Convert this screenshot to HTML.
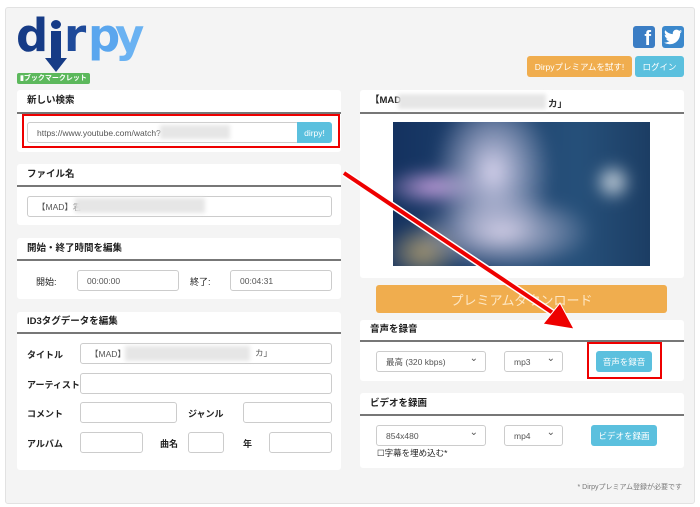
<!DOCTYPE html>
<html><head><meta charset="utf-8"><style>
*{box-sizing:border-box;margin:0;padding:0}
body{width:700px;height:507px;background:#fff;position:relative;overflow:hidden;font-family:"Liberation Sans","Noto Sans CJK JP",sans-serif;font-size:9px;color:#333}
.a{position:absolute}
.wrap{left:5px;top:7px;width:690px;height:497px;background:#f4f4f4;border:1px solid #e2e2e2;border-radius:3px}
.panel{position:absolute;background:#fff;border-radius:3px}
.ph{position:absolute;left:0;right:0;top:0;border-bottom:2px solid #777;font-weight:bold;font-size:9.5px;color:#222;padding-left:10px}
.in{position:absolute;background:#fff;border:1px solid #ccc;border-radius:3px;font-size:8.5px;color:#555;padding-left:9px;display:flex;align-items:center}
.lb{position:absolute;font-size:9px;font-weight:bold;color:#222}
.btn{position:absolute;color:#fff;border-radius:3px;display:flex;align-items:center;justify-content:center;font-size:8.5px}
.blur{position:absolute;background:#e6e6e6;filter:blur(2px)}
.sel:after{content:"⌄";position:absolute;right:7px;top:1px;font-size:10px;color:#555}
.lg{position:absolute;font-family:'DejaVu Sans',sans-serif;font-weight:bold;font-size:45px;line-height:45px;top:13px}
</style></head><body>
<div class="a wrap"></div>
<!-- logo -->
<div class="lg" style="left:16px;color:#163b86">d</div>
<div class="a" style="left:51px;top:20px;width:10px;height:9px;border-radius:50%;background:#163b86"></div>
<div class="a" style="left:51px;top:31px;width:10px;height:29px;background:#163b86"></div>
<div class="a" style="left:45px;top:58px;width:0;height:0;border-left:11px solid transparent;border-right:11px solid transparent;border-top:14px solid #163b86"></div>
<div class="lg" style="left:64px;color:#1e4a9a">r</div>
<div class="lg" style="left:88px;color:#5aa6ee">p</div>
<div class="lg" style="left:115px;color:#6ab2f2">y</div>
<div class="a" style="left:17px;top:73px;width:73px;height:11px;background:#5cb85c;border-radius:2px;color:#fff;font-size:7px;font-weight:bold;line-height:11px;padding-left:3px">▮ブックマークレット</div>
<!-- social -->
<div class="a" style="left:633px;top:26px;width:22px;height:22px;background:#3b7dc4;border-radius:3px;color:#fff;font-weight:bold;font-size:20px;text-align:right;padding-right:4px;line-height:26px">f</div>
<div class="a" style="left:662px;top:26px;width:22px;height:22px;background:#3b88cc;border-radius:3px"></div>
<svg class="a" style="left:664px;top:29px" width="18" height="16" viewBox="0 0 24 20"><path fill="#fff" d="M24 2.4c-.9.4-1.8.6-2.8.8 1-.6 1.8-1.6 2.2-2.7-1 .6-2 1-3.1 1.2C19.3.7 18 .1 16.6.1c-2.7 0-4.900 2.2-4.9 4.9 0 .4 0 .8.1 1.1C7.7 5.9 4.1 4 1.7 1 1.2 1.7 1 2.6 1 3.5c0 1.7.9 3.2 2.2 4.1-.8 0-1.6-.2-2.2-.6v.1c0 2.4 1.7 4.4 3.9 4.8-.4.1-.8.2-1.3.2-.3 0-.6 0-.9-.1.6 2 2.4 3.4 4.6 3.4-1.7 1.3-3.800 2.1-6.1 2.1-.4 0-.8 0-1.2-.1 2.2 1.4 4.8 2.2 7.5 2.2 9.1 0 14-7.5 14-14v-.6c1-.7 1.8-1.600 2.5-2.6z"/></svg>
<div class="btn" style="left:527px;top:56px;width:105px;height:21px;background:#f0ad4e">Dirpyプレミアムを試す!</div>
<div class="btn" style="left:635px;top:56px;width:49px;height:21px;background:#5bc0de">ログイン</div>
<!-- left panels -->
<div class="panel" style="left:17px;top:90px;width:324px;height:62px"><div class="ph" style="height:24px;line-height:22px">新しい検索</div></div>
<div class="in" style="left:27px;top:122px;width:272px;height:21px">https://www.youtube.com/watch?</div>
<div class="blur" style="left:160px;top:125px;width:70px;height:14px"></div>
<div class="btn" style="left:297px;top:122px;width:35px;height:21px;background:#5bc0de;border-radius:0 3px 3px 0">dirpy!</div>
<div class="a" style="left:22px;top:114px;width:318px;height:34px;border:2px solid #e00"></div>

<div class="panel" style="left:17px;top:164px;width:324px;height:61px"><div class="ph" style="height:23px;line-height:21px">ファイル名</div></div>
<div class="in" style="left:27px;top:196px;width:305px;height:21px">【MAD】君</div>
<div class="blur" style="left:75px;top:198px;width:130px;height:15px"></div>

<div class="panel" style="left:17px;top:238px;width:324px;height:61px"><div class="ph" style="height:23px;line-height:21px">開始・終了時間を編集</div></div>
<div class="lb" style="left:36px;top:275px;font-weight:normal">開始:</div>
<div class="in" style="left:77px;top:270px;width:102px;height:21px">00:00:00</div>
<div class="lb" style="left:190px;top:275px;font-weight:normal">終了:</div>
<div class="in" style="left:230px;top:270px;width:102px;height:21px">00:04:31</div>

<div class="panel" style="left:17px;top:312px;width:324px;height:158px"><div class="ph" style="height:22px;line-height:20px">ID3タグデータを編集</div></div>
<div class="lb" style="left:27px;top:348px">タイトル</div>
<div class="in" style="left:80px;top:343px;width:252px;height:21px">【MAD】</div>
<div class="blur" style="left:125px;top:346px;width:125px;height:15px"></div>
<div class="a" style="left:255px;top:347px;font-size:8.5px;color:#555">カ」</div>
<div class="lb" style="left:27px;top:378px">アーティスト</div>
<div class="in" style="left:80px;top:373px;width:252px;height:21px"></div>
<div class="lb" style="left:27px;top:407px">コメント</div>
<div class="in" style="left:80px;top:402px;width:97px;height:21px"></div>
<div class="lb" style="left:188px;top:407px">ジャンル</div>
<div class="in" style="left:243px;top:402px;width:89px;height:21px"></div>
<div class="lb" style="left:27px;top:437px">アルバム</div>
<div class="in" style="left:80px;top:432px;width:63px;height:21px"></div>
<div class="lb" style="left:160px;top:437px">曲名</div>
<div class="in" style="left:188px;top:432px;width:36px;height:21px"></div>
<div class="lb" style="left:243px;top:437px">年</div>
<div class="in" style="left:269px;top:432px;width:63px;height:21px"></div>

<!-- right -->
<div class="panel" style="left:360px;top:90px;width:324px;height:188px"><div class="ph" style="height:24px;line-height:22px">【MAD</div></div>
<div class="blur" style="left:398px;top:94px;width:148px;height:15px"></div>
<div class="a" style="left:548px;top:96px;font-size:9.5px;font-weight:bold">カ」</div>
<div class="a" style="left:393px;top:122px;width:257px;height:144px;overflow:hidden;background:#1d3a6a">
 <div class="a" style="left:-10px;top:-10px;width:280px;height:170px;filter:blur(7px);background:
 radial-gradient(ellipse 60px 80px at 110px 60px,#d8d4ee,transparent),
 radial-gradient(ellipse 50px 20px at 50px 75px,#c8a0e0,transparent),
 radial-gradient(ellipse 90px 40px at 120px 120px,#d0cce4,transparent),
 radial-gradient(ellipse 20px 20px at 230px 70px,#e0e8ee,transparent),
 radial-gradient(ellipse 40px 30px at 40px 140px,#a89870,transparent),
 linear-gradient(90deg,#13305e,#26507a 70%,#1a3a60)"></div>
</div>
<div class="btn" style="left:376px;top:285px;width:291px;height:28px;background:#f0ad4e;font-size:13px;color:#fde7c4">プレミアムダウンロード</div>

<div class="panel" style="left:360px;top:320px;width:324px;height:61px"><div class="ph" style="height:22px;line-height:20px">音声を録音</div></div>
<div class="in sel" style="left:376px;top:351px;width:110px;height:21px">最高 (320 kbps)</div>
<div class="in sel" style="left:504px;top:351px;width:59px;height:21px">mp3</div>
<div class="btn" style="left:596px;top:351px;width:56px;height:21px;background:#5bc0de">音声を録音</div>
<div class="a" style="left:587px;top:342px;width:75px;height:37px;border:2px solid #e00"></div>

<div class="panel" style="left:360px;top:393px;width:324px;height:75px"><div class="ph" style="height:23px;line-height:21px">ビデオを録画</div></div>
<div class="in sel" style="left:376px;top:425px;width:110px;height:21px">854x480</div>
<div class="in sel" style="left:504px;top:425px;width:59px;height:21px">mp4</div>
<div class="btn" style="left:591px;top:425px;width:66px;height:21px;background:#5bc0de">ビデオを録画</div>
<div class="a" style="left:377px;top:447px;font-size:8.5px;color:#222">☐字幕を埋め込む*</div>
<div class="a" style="left:560px;top:482px;font-size:7px;color:#777;width:122px;text-align:right">* Dirpyプレミアム登録が必要です</div>

<!-- arrow -->
<svg class="a" style="left:0;top:0" width="700" height="507">
<line x1="344" y1="173" x2="556" y2="315" stroke="#fff" stroke-width="7"/>
<line x1="344" y1="173" x2="556" y2="315" stroke="#e00" stroke-width="4"/>
<polygon points="574,329 543,324 560,303" fill="#e00" stroke="#fff" stroke-width="1"/>
</svg>
</body></html>
